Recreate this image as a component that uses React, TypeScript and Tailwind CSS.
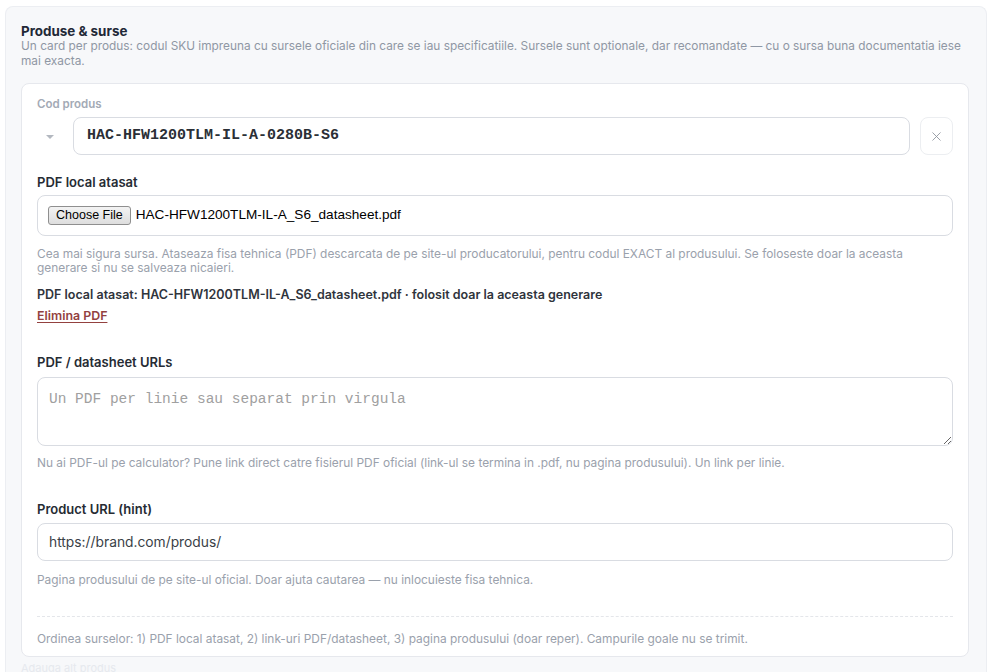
import { X } from "lucide-react";

const sans = { fontFamily: "Inter, 'Noto Sans', sans-serif" };

function Help({ children, className = "" }: { children: React.ReactNode; className?: string }) {
  return <p className={`text-[11.9px] leading-[14px] text-[#9aa1ac] ${className}`}>{children}</p>;
}

export default function App() {
  return (
    <div className="min-h-[672px] bg-white pl-[5px] pr-[3px] pt-[6px]" style={sans}>
      <div className="rounded-t-lg border border-b-0 border-[#eceef2] bg-[#f7f8fa] px-[15px] pt-[16px] pb-3">
        <h2 className="text-[13.4px] font-bold leading-4 text-[#1f2937]">Produse &amp; surse</h2>
        <p className="text-[11.85px] leading-[15px] text-[#8f97a4]">
          Un card per produs: codul SKU impreuna cu sursele oficiale din care se iau specificatiile. Sursele sunt optionale, dar recomandate — cu o sursa buna documentatia iese mai exacta.
        </p>

        <div className="mt-[14px] mr-[2px] rounded-lg border border-[#e6e8ed] bg-white pl-[15px] pr-[15px] pt-[12px] pb-[10px]">
          <div className="text-[11.5px] font-semibold leading-4 text-[#a3aab5]">Cod produs</div>
          <div className="mt-[5px] flex items-center gap-[10px]">
            <div className="flex w-[26px] justify-center">
              <span className="mt-[2px] h-0 w-0 border-x-[4px] border-t-[4px] border-x-transparent border-t-[#b3b8c0]" />
            </div>
            <div className="flex h-[38px] flex-1 items-center rounded-lg border border-[#d9dce2] px-[13px]">
              <span
                className="text-[15px] font-bold text-[#2b2f36]"
                style={{ fontFamily: "'Liberation Mono', monospace" }}
              >
                HAC-HFW1200TLM-IL-A-0280B-S6
              </span>
            </div>
            <button className="flex h-[38px] w-[33px] items-center justify-center rounded-lg border border-[#eceef1] bg-white text-[#8e949d]">
              <X size={15} strokeWidth={1.4} />
            </button>
          </div>

          <div className="mt-[19px] text-[13px] font-semibold leading-4 text-[#262b33]">PDF local atasat</div>
          <div
            className="mt-[5px] flex h-[41px] items-center rounded-lg border border-[#d9dce2] px-[10px]"
            style={{ fontFamily: "'Liberation Sans', Arial, sans-serif" }}
          >
            <span className="rounded-[3px] border border-[#8f8f8f] bg-gradient-to-b from-[#f3f3f3] to-[#dedede] px-[7px] text-[12.5px] leading-[17px] text-black">
              Choose File
            </span>
            <span className="ml-[5px] text-[13.6px] text-black">HAC-HFW1200TLM-IL-A_S6_datasheet.pdf</span>
          </div>
          <Help className="mt-[11px]">
            Cea mai sigura sursa. Ataseaza fisa tehnica (PDF) descarcata de pe site-ul producatorului, pentru codul EXACT al produsului. Se foloseste doar la aceasta generare si nu se salveaza nicaieri.
          </Help>
          <p className="mt-[12px] text-[12.5px] font-semibold leading-4 text-[#2f343c]">
            PDF local atasat: HAC-HFW1200TLM-IL-A_S6_datasheet.pdf · folosit doar la aceasta generare
          </p>
          <button className="mt-[5px] block text-[12.4px] font-semibold leading-4 text-[#93413f] underline underline-offset-2">
            Elimina PDF
          </button>

          <div className="mt-[30px] text-[13px] font-semibold leading-4 text-[#262b33]">PDF / datasheet URLs</div>
          <textarea
            className="mt-[7px] block h-[69px] w-full resize-y rounded-lg border border-[#d9dce2] px-[11px] py-[12px] text-[14.5px] leading-[18px] text-[#333] placeholder:text-[#a0a0a0] outline-none"
            style={{ fontFamily: "'Liberation Mono', monospace" }}
            placeholder="Un PDF per linie sau separat prin virgula"
          />
          <Help className="mt-[10px]">
            Nu ai PDF-ul pe calculator? Pune link direct catre fisierul PDF oficial (link-ul se termina in .pdf, nu pagina produsului). Un link per linie.
          </Help>

          <div className="mt-[31px] text-[13px] font-semibold leading-4 text-[#262b33]">Product URL (hint)</div>
          <div className="mt-[6px] flex h-[38px] items-center rounded-lg border border-[#d9dce2] px-[11px]">
            <span className="text-[13.8px] text-[#3a3f47]">https://brand.com/produs/</span>
          </div>
          <Help className="mt-[12px]">Pagina produsului de pe site-ul oficial. Doar ajuta cautarea — nu inlocuieste fisa tehnica.</Help>

          <div className="mt-[29px] border-t border-dashed border-[#e4e6ea]" />
          <Help className="mt-[15px]">
            Ordinea surselor: 1) PDF local atasat, 2) link-uri PDF/datasheet, 3) pagina produsului (doar reper). Campurile goale nu se trimit.
          </Help>
        </div>
        <div className="mt-[5px] text-[11px] leading-[12px] text-[#e6e9ee]">Adauga alt produs</div>
      </div>
    </div>
  );
}
